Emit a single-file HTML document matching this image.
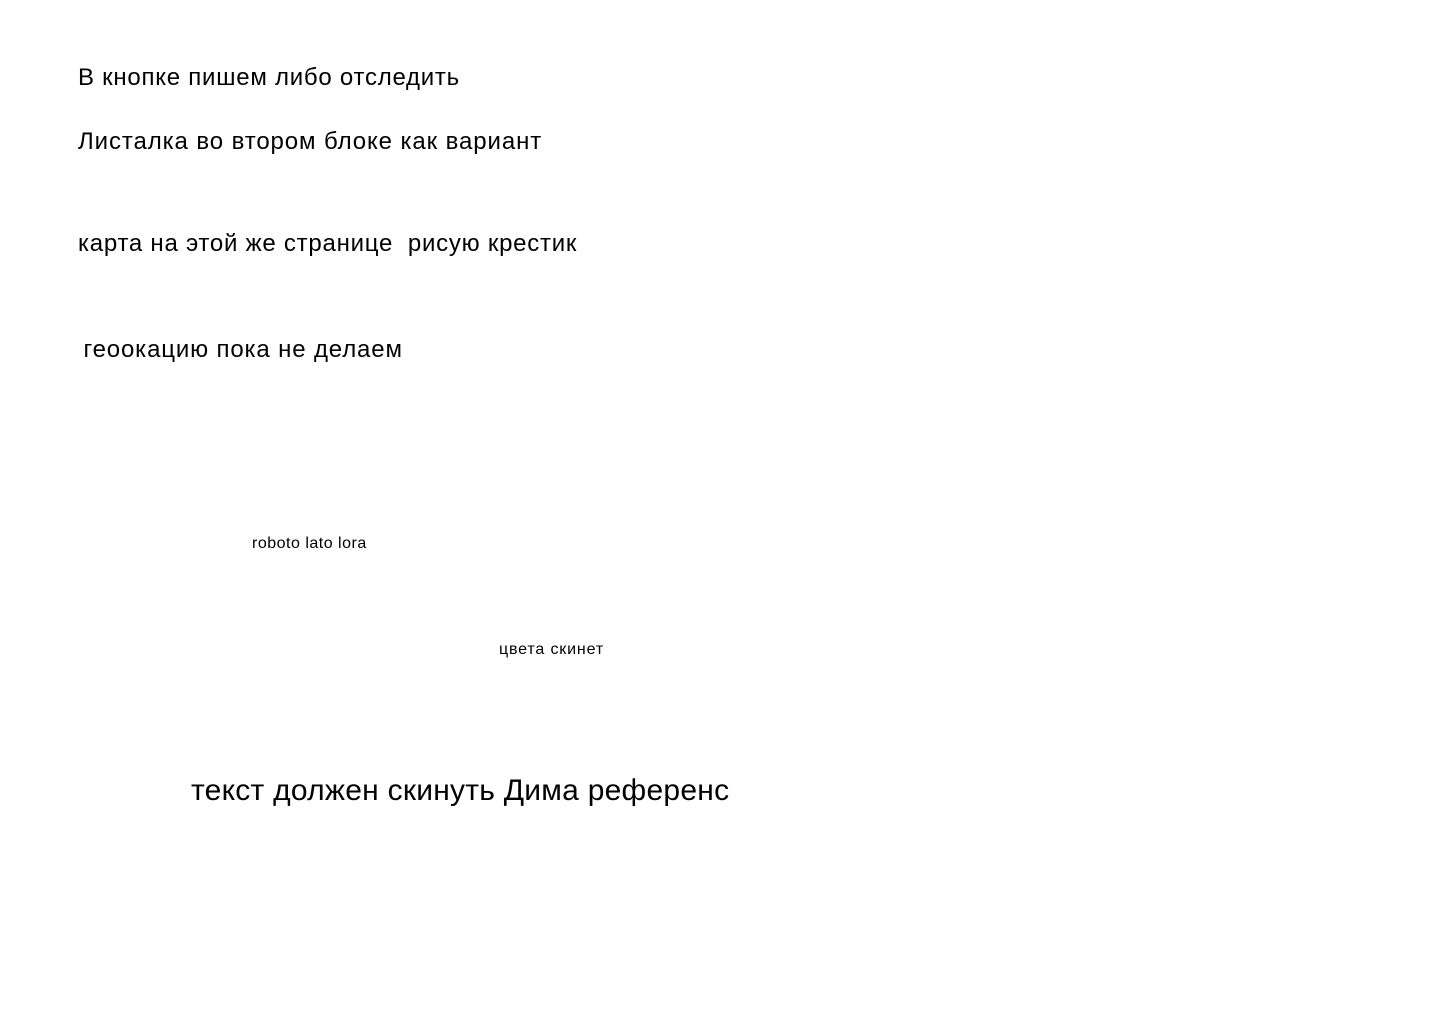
<!DOCTYPE html>
<html><head><meta charset="utf-8"><style>
html,body{margin:0;padding:0;width:1440px;height:1024px;background:#fff;overflow:hidden}
div{position:absolute;font-family:"Liberation Sans","DejaVu Sans",sans-serif;color:#000;white-space:pre;line-height:1}
</style></head><body>
<div style="left:78px;top:66px;font-size:24px;letter-spacing:0.75px">В кнопке пишем либо отследить</div>
<div style="left:78px;top:130px;font-size:24px;letter-spacing:0.9px">Листалка во втором блоке как вариант</div>
<div style="left:78px;top:232px;font-size:24px;letter-spacing:0.75px">карта на этой же странице  рисую крестик</div>
<div style="left:76px;top:338px;font-size:24px;letter-spacing:0.85px"> геоокацию пока не делаем</div>
<div style="left:252px;top:536px;font-size:16px;letter-spacing:0.5px">roboto lato lora</div>
<div style="left:499px;top:642px;font-size:16px;letter-spacing:0.85px">цвета скинет</div>
<div style="left:191px;top:776px;font-size:30px;letter-spacing:0.25px">текст должен скинуть Дима референс</div>
</body></html>
